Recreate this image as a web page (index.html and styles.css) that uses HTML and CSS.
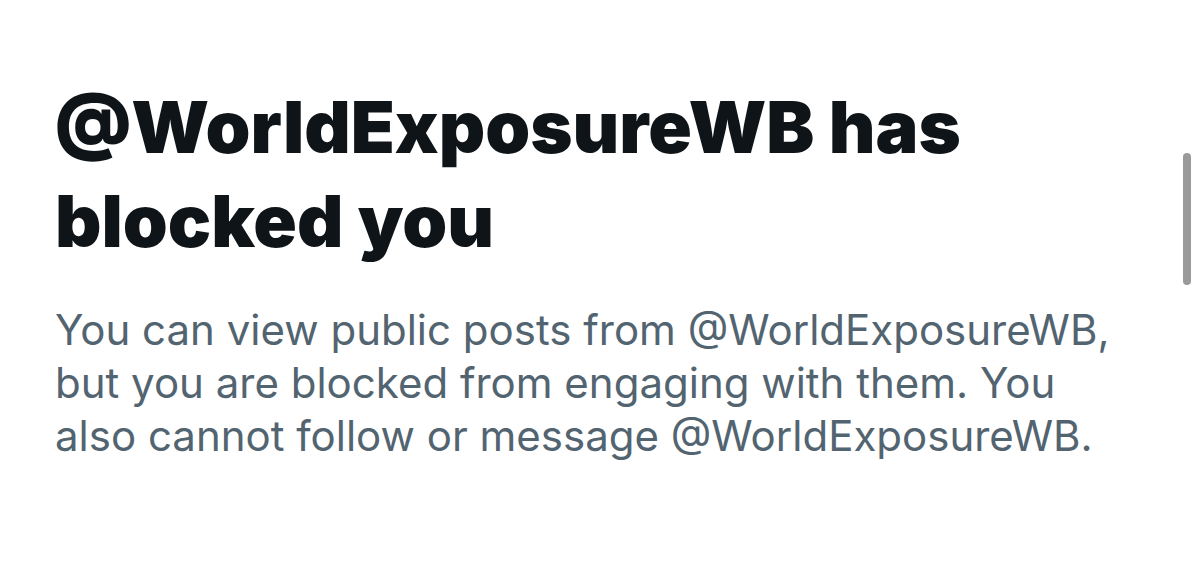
FILE: index.html
```html
<!DOCTYPE html>
<html lang="en">
<head>
  <meta charset="UTF-8" />
  <title>Blocked</title>
  <link rel="stylesheet" href="styles.css">
</head>
<body>

<div class="screen">
  <div class="blocked">
    <h1>@WorldExposureWB has<br>blocked you</h1>
    <p>You can view public posts from @WorldExposureWB,<br>but you are blocked from engaging with them. You<br>also cannot follow or message @WorldExposureWB.</p>
  </div>
  <div class="scrollbar"></div>
</div>

</body>
</html>
```

FILE: styles.css
```css
body {
  margin: 0; padding: 0;
  background: #fff;
  font-family: Inter, 'Liberation Sans', sans-serif;
}
.screen {
  position: relative;
  width: 1200px;
  height: 565px;
  overflow: hidden;
}
.blocked {
  padding: 80px 0 0 55px;
}
.blocked h1 {
  margin: 0;
  color: #0f1419;
  font-size: 72px;
  font-weight: 900;
  line-height: 94px;
}
.blocked p {
  margin: 35px 0 0;
  color: #536471;
  font-size: 42px;
  line-height: 53px;
}
.scrollbar {
  position: absolute;
  left: 1183px;
  top: 153px;
  width: 8px;
  height: 132px;
  border-radius: 4px;
  background: #9a9a9a;
}
```
